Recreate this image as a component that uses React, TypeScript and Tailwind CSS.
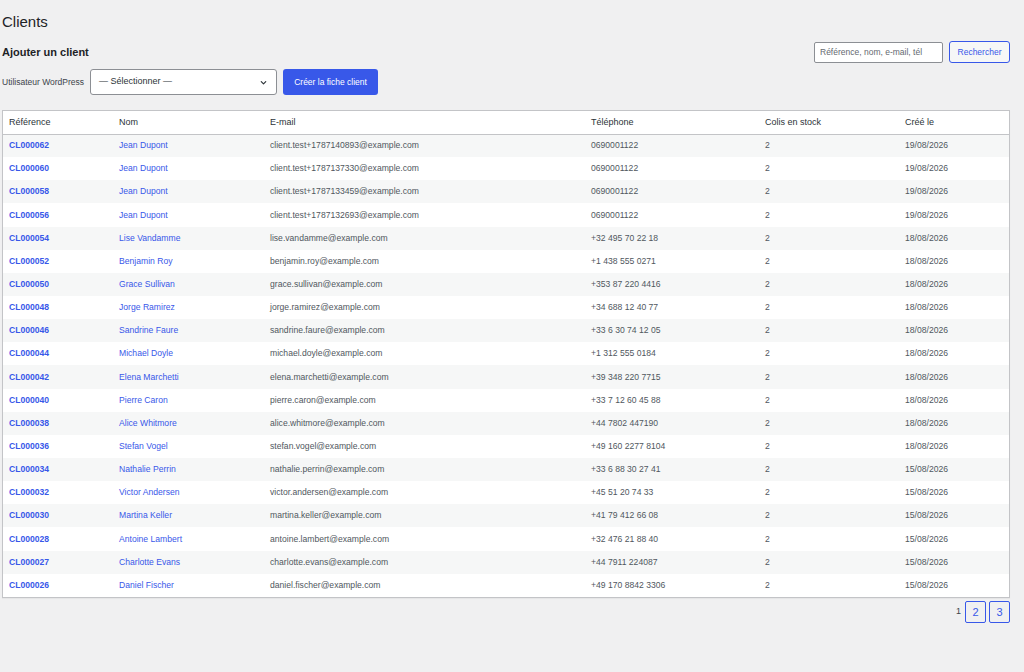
import React from 'react';

const clients = [
    ['CL000062', 'Jean Dupont', 'client.test+1787140893@example.com', '0690001122', '2', '19/08/2026'],
    ['CL000060', 'Jean Dupont', 'client.test+1787137330@example.com', '0690001122', '2', '19/08/2026'],
    ['CL000058', 'Jean Dupont', 'client.test+1787133459@example.com', '0690001122', '2', '19/08/2026'],
    ['CL000056', 'Jean Dupont', 'client.test+1787132693@example.com', '0690001122', '2', '19/08/2026'],
    ['CL000054', 'Lise Vandamme', 'lise.vandamme@example.com', '+32 495 70 22 18', '2', '18/08/2026'],
    ['CL000052', 'Benjamin Roy', 'benjamin.roy@example.com', '+1 438 555 0271', '2', '18/08/2026'],
    ['CL000050', 'Grace Sullivan', 'grace.sullivan@example.com', '+353 87 220 4416', '2', '18/08/2026'],
    ['CL000048', 'Jorge Ramirez', 'jorge.ramirez@example.com', '+34 688 12 40 77', '2', '18/08/2026'],
    ['CL000046', 'Sandrine Faure', 'sandrine.faure@example.com', '+33 6 30 74 12 05', '2', '18/08/2026'],
    ['CL000044', 'Michael Doyle', 'michael.doyle@example.com', '+1 312 555 0184', '2', '18/08/2026'],
    ['CL000042', 'Elena Marchetti', 'elena.marchetti@example.com', '+39 348 220 7715', '2', '18/08/2026'],
    ['CL000040', 'Pierre Caron', 'pierre.caron@example.com', '+33 7 12 60 45 88', '2', '18/08/2026'],
    ['CL000038', 'Alice Whitmore', 'alice.whitmore@example.com', '+44 7802 447190', '2', '18/08/2026'],
    ['CL000036', 'Stefan Vogel', 'stefan.vogel@example.com', '+49 160 2277 8104', '2', '18/08/2026'],
    ['CL000034', 'Nathalie Perrin', 'nathalie.perrin@example.com', '+33 6 88 30 27 41', '2', '15/08/2026'],
    ['CL000032', 'Victor Andersen', 'victor.andersen@example.com', '+45 51 20 74 33', '2', '15/08/2026'],
    ['CL000030', 'Martina Keller', 'martina.keller@example.com', '+41 79 412 66 08', '2', '15/08/2026'],
    ['CL000028', 'Antoine Lambert', 'antoine.lambert@example.com', '+32 476 21 88 40', '2', '15/08/2026'],
    ['CL000027', 'Charlotte Evans', 'charlotte.evans@example.com', '+44 7911 224087', '2', '15/08/2026'],
    ['CL000026', 'Daniel Fischer', 'daniel.fischer@example.com', '+49 170 8842 3306', '2', '15/08/2026'],
];

const headers = ['Référence', 'Nom', 'E-mail', 'Téléphone', 'Colis en stock', 'Créé le'];
const widths = ['w-[110px]', 'w-[151px]', 'w-[321px]', 'w-[174px]', 'w-[140px]', ''];

export default function App() {
    return (
        <div className="min-h-screen bg-[#f0f0f1] pl-[2px] pr-[14px] pt-[13px] font-['Liberation_Sans',Arial,sans-serif] text-[#3c434a]">
            <h1 className="text-[15px] leading-[18px] text-[#1d2327]">Clients</h1>

            <div className="mt-[14px] flex items-start justify-between">
                <div>
                    <h2 className="text-[11px] leading-[14px] font-bold text-[#1d2327]">Ajouter un client</h2>
                    <div className="mt-[10px] flex items-center gap-[6px]">
                        <span className="text-[8.5px] text-[#3c434a]">Utilisateur WordPress</span>
                        <div className="flex h-[26px] w-[187px] items-center justify-between rounded-[3px] border border-[#8c8f94] bg-white pl-[8px] pr-[8px] text-[9px] text-[#2c3338]">
                            <span>— Sélectionner —</span>
                            <svg width="9" height="9" viewBox="0 0 20 20" fill="none" stroke="#2c3338" strokeWidth="2.6" strokeLinecap="round" strokeLinejoin="round">
                                <path d="M5 8l5 5 5-5" />
                            </svg>
                        </div>
                        <button className="h-[26px] w-[95px] rounded-[3px] bg-[#3858e9] text-[8.5px] text-white">
                            Créer la fiche client
                        </button>
                    </div>
                </div>

                <div className="mt-[-4px] flex items-center gap-[6px]">
                    <input
                        placeholder="Référence, nom, e-mail, tél"
                        className="h-[21px] w-[129px] rounded-[2px] border border-[#8c8f94] bg-white px-[5px] text-[8.5px] placeholder-[#646970] outline-none"
                    />
                    <button className="h-[22px] w-[61px] rounded-[3px] border border-[#3858e9] bg-[#f6f7f7] text-[8.5px] text-[#3858e9]">
                        Rechercher
                    </button>
                </div>
            </div>

            <div className="mt-[15px] border border-[#c3c4c7] bg-white shadow-[0_1px_1px_rgba(0,0,0,0.04)]">
                <table className="w-full table-fixed border-collapse text-[8.6px]">
                    <thead>
                        <tr className="h-[23px] border-b border-[#c3c4c7] text-[9px]">
                            {headers.map((h, i) => (
                                <th key={h} className={`${widths[i]} pl-[6px] text-left font-normal text-[#2c3338]`}>{h}</th>
                            ))}
                        </tr>
                    </thead>
                    <tbody>
                        {clients.map((c, i) => (
                            <tr key={c[0]} className={`h-[23.15px] ${i % 2 === 0 ? 'bg-[#f6f7f7]' : 'bg-white'}`}>
                                <td className="pl-[6px] font-bold text-[#3858e9]">{c[0]}</td>
                                <td className="pl-[6px] text-[#3858e9]">{c[1]}</td>
                                <td className="pl-[6px] text-[#50575e]">{c[2]}</td>
                                <td className="pl-[6px] text-[#50575e]">{c[3]}</td>
                                <td className="pl-[6px] text-[#50575e]">{c[4]}</td>
                                <td className="pl-[6px] text-[#50575e]">{c[5]}</td>
                            </tr>
                        ))}
                    </tbody>
                </table>
            </div>

            <div className="mt-[3px] flex items-center justify-end gap-[3px]">
                <span className="mr-[1px] text-[9px] text-[#3c434a]">1</span>
                <span className="flex h-[22px] w-[21px] items-center justify-center rounded-[2px] border border-[#3858e9] text-[11px] text-[#3858e9]">2</span>
                <span className="flex h-[22px] w-[21px] items-center justify-center rounded-[2px] border border-[#3858e9] text-[11px] text-[#3858e9]">3</span>
            </div>
        </div>
    );
}
